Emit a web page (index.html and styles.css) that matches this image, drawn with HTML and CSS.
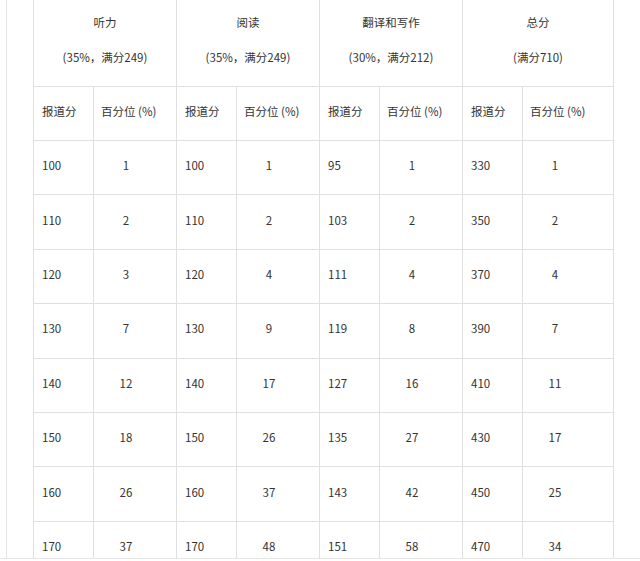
FILE: index.html
```html
<!DOCTYPE html>
<html lang="zh">
<head>
<meta charset="utf-8">
<link rel="stylesheet" href="styles.css">
</head>
<body>
<div class="frame">
  <div class="rail"></div>
  <table class="score">
    <colgroup>
      <col class="c-a"><col class="c-b">
      <col class="c-a"><col class="c-b">
      <col class="c-a"><col class="c-b">
      <col class="c-a"><col class="c-last">
    </colgroup>
    <thead>
      <tr class="head">
        <th colspan="2"><p>听力</p><p>(35%，满分249)</p></th>
        <th colspan="2"><p>阅读</p><p>(35%，满分249)</p></th>
        <th colspan="2"><p>翻译和写作</p><p>(30%，满分212)</p></th>
        <th colspan="2"><p>总分</p><p>(满分710)</p></th>
      </tr>
      <tr class="sub">
        <td>报道分</td><td class="pct"><span>百分位 (%)</span></td>
        <td>报道分</td><td class="pct"><span>百分位 (%)</span></td>
        <td>报道分</td><td class="pct"><span>百分位 (%)</span></td>
        <td>报道分</td><td class="pct"><span>百分位 (%)</span></td>
      </tr>
    </thead>
    <tbody>
      <tr><td>100</td><td class="pct"><span>1</span></td><td>100</td><td class="pct"><span>1</span></td><td>95</td><td class="pct"><span>1</span></td><td>330</td><td class="pct"><span>1</span></td></tr>
      <tr><td>110</td><td class="pct"><span>2</span></td><td>110</td><td class="pct"><span>2</span></td><td>103</td><td class="pct"><span>2</span></td><td>350</td><td class="pct"><span>2</span></td></tr>
      <tr><td>120</td><td class="pct"><span>3</span></td><td>120</td><td class="pct"><span>4</span></td><td>111</td><td class="pct"><span>4</span></td><td>370</td><td class="pct"><span>4</span></td></tr>
      <tr><td>130</td><td class="pct"><span>7</span></td><td>130</td><td class="pct"><span>9</span></td><td>119</td><td class="pct"><span>8</span></td><td>390</td><td class="pct"><span>7</span></td></tr>
      <tr><td>140</td><td class="pct"><span>12</span></td><td>140</td><td class="pct"><span>17</span></td><td>127</td><td class="pct"><span>16</span></td><td>410</td><td class="pct"><span>11</span></td></tr>
      <tr><td>150</td><td class="pct"><span>18</span></td><td>150</td><td class="pct"><span>26</span></td><td>135</td><td class="pct"><span>27</span></td><td>430</td><td class="pct"><span>17</span></td></tr>
      <tr><td>160</td><td class="pct"><span>26</span></td><td>160</td><td class="pct"><span>37</span></td><td>143</td><td class="pct"><span>42</span></td><td>450</td><td class="pct"><span>25</span></td></tr>
      <tr><td>170</td><td class="pct"><span>37</span></td><td>170</td><td class="pct"><span>48</span></td><td>151</td><td class="pct"><span>58</span></td><td>470</td><td class="pct"><span>34</span></td></tr>
    </tbody>
  </table>
</div>
</body>
</html>
```
FILE: styles.css
```css
html, body {
  margin: 0;
  padding: 0;
  background: #fff;
}
body {
  font-family: "Noto Sans CJK SC", "Noto Sans", sans-serif;
  font-size: 11.5px;
  color: #333;
}
.frame {
  display: flex;
  height: 558px;
  overflow: hidden;
  border-bottom: 1px solid #e6e6e6;
}
.rail {
  flex: 0 0 26px;
  margin-left: 6px;
  border-left: 1px solid #e4e4e4;
}
.score {
  border-collapse: collapse;
  table-layout: fixed;
  width: 581px;
  align-self: flex-start;
  margin-top: -1px;
}
.c-a { width: 60px; }
.c-b { width: 83px; }
.c-last { width: 91px; }
.score th, .score td {
  border: 1px solid #e0e0e0;
  padding: 0 0 5px 8px;
  text-align: left;
  font-weight: normal;
  vertical-align: middle;
}
.score th {
  text-align: center;
  padding: 0 0 7px 0;
  height: 79px;
}
.score th p {
  margin: 0;
  line-height: 18px;
}
.score th p + p {
  margin-top: 17px;
}
.score .sub td {
  height: 48px;
}
.score tbody td {
  height: 48.4px;
}
.score td.pct {
  padding-left: 7px;
}
.score td.pct span {
  display: inline-block;
  width: 50px;
  text-align: center;
  white-space: nowrap;
}
.score .sub td.pct span {
  text-align: left;
}
```
